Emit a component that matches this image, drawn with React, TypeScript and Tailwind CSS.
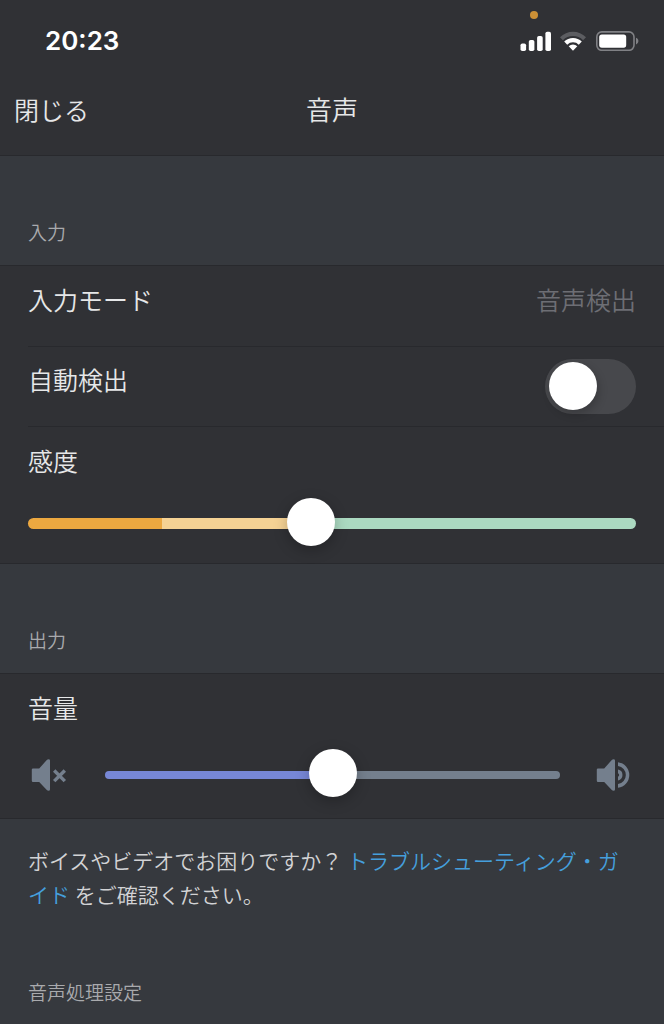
import { useState } from 'react';
import type { CSSProperties, ReactNode } from 'react';

const THUMB = 48;

function fillStyle(value: number): CSSProperties {
  const f = value / 1000;
  return { '--fill': `calc(${THUMB / 2}px + (100% - ${THUMB}px) * ${f})` } as CSSProperties;
}

const sliderBase =
  'block w-full cursor-pointer appearance-none bg-transparent [&::-webkit-slider-thumb]:size-12 [&::-webkit-slider-thumb]:appearance-none [&::-webkit-slider-thumb]:rounded-full [&::-webkit-slider-thumb]:bg-white [&::-webkit-slider-thumb]:shadow-[0_4px_14px_rgba(0,0,0,0.25)]';

function StatusBar() {
  return (
    <div className="flex items-center justify-between pl-[45px] pr-[25px] pt-[23px]">
      <time className="font-['Inter',sans-serif] text-[26px] leading-9 font-semibold text-white">20:23</time>
      <div className="relative flex items-center gap-2">
        <span className="absolute -top-5 left-[10px] size-2 rounded-full bg-[#cc9036]" />
        <svg width="32" height="20" viewBox="0 0 32 20" fill="#fff" aria-hidden="true">
          <rect x="0.5" y="12.500" width="5.600" height="7.500" rx="1.8" />
          <rect x="8.800" y="9" width="5.600" height="11" rx="1.8" />
          <rect x="17.100" y="5" width="5.600" height="15" rx="1.8" />
          <rect x="25.400" y="0.700" width="5.600" height="19.300" rx="1.8" />
        </svg>
        <svg width="28" height="20" viewBox="0 0 28 20" aria-hidden="true">
          <path d="M0 6.200a18.500 18.500 0 0 1 26 0l-2.900 3a14.300 14.300 0 0 0-20.200 0z" fill="#5c5d61" />
          <path d="M4.200 10.600a12.400 12.400 0 0 1 17.600 0l-3 3.100a8.200 8.200 0 0 0-11.600 0z" fill="#fff" />
          <path d="M8.700 15.300a6.200 6.200 0 0 1 8.600 0L13 19.800z" fill="#fff" />
        </svg>
        <svg width="43" height="20" viewBox="0 0 43 20" aria-hidden="true">
          <rect x="0.800" y="0.900" width="37.200" height="18.400" rx="5" fill="none" stroke="#808185" strokeWidth="1.6" />
          <rect x="3.200" y="3.500" width="27" height="13.200" rx="2.6" fill="#fff" />
          <path d="M40 6.800v6.600c1.500-.6 2.400-1.800 2.400-3.300S41.500 7.400 40 6.800z" fill="#808185" />
        </svg>
      </div>
    </div>
  );
}

function SectionTitle({ children }: { children: ReactNode }) {
  return <h2 className="px-7 pt-[60px] pb-[17px] text-[19px] leading-8 font-[350] text-[#a9aaad]">{children}</h2>;
}

function MutedIcon() {
  return (
    <svg width="36" height="34" viewBox="0 0 36 34" className="shrink-0" aria-hidden="true">
      <path d="M2 10.400h6.200L15.800 2Q16.600 1.200 17.500 1.200q1.500 0 1.500 1.300v29q0 1.300-1.500 1.300-.9 0-1.700-.8l-7.600-8H2Q.8 24 .8 22.800V11.600Q.8 10.400 2 10.400z" fill="#747f8d" />
      <path d="m24.400 13.700 8.200 8.200m0-8.200-8.200 8.200" fill="none" stroke="#747f8d" strokeWidth="3.400" strokeLinecap="square" />
    </svg>
  );
}

function SpeakerIcon() {
  return (
    <svg width="36" height="34" viewBox="0 0 36 34" className="shrink-0" aria-hidden="true">
      <path d="M2 10.400h6.200L15.800 2Q16.600 1.200 17.500 1.200q1.500 0 1.500 1.300v29q0 1.300-1.500 1.300-.9 0-1.700-.8l-7.600-8H2Q.8 24 .8 22.800V11.600Q.8 10.400 2 10.400z" fill="#747f8d" />
      <path d="M22 11.600a5.500 5.500 0 0 1 0 10.800v-3.600a2 2 0 0 0 0-3.600z" fill="#747f8d" />
      <path d="M22 4.200a12.900 12.900 0 0 1 0 25.600v-3.700a9.200 9.200 0 0 0 0-18.200z" fill="#747f8d" />
    </svg>
  );
}

export default function App() {
  const [auto, setAuto] = useState(false);
  const [sensitivity, setSensitivity] = useState(462);
  const [volume, setVolume] = useState(502);

  return (
    <div lang="ja" className="min-h-screen bg-[#36393e] font-['Noto_Sans_CJK_JP',sans-serif] text-[#e6e7e8]">
      <header className="border-b border-[#28292d] bg-[#303135]">
        <StatusBar />
        <div className="grid grid-cols-[1fr_auto_1fr] items-center px-[14px] pt-[30px] pb-[26px]">
          <button type="button" className="cursor-pointer justify-self-start text-[25px] leading-10 font-[350]">
            閉じる
          </button>
          <h1 className="text-[26px] leading-10 font-[350]">音声</h1>
        </div>
      </header>

      <main>
        <section>
          <SectionTitle>入力</SectionTitle>
          <div className="border-y border-[#28292d] bg-[#303135]">
            <button type="button" className="flex w-full cursor-pointer items-center justify-between px-7 pt-[13px] pb-[27px] text-[25px] leading-10 font-[350]">
              <span>入力モード</span>
              <span className="text-[#6d6e74]">音声検出</span>
            </button>
            <label className="ml-7 flex cursor-pointer justify-between border-y border-[#28292d] pt-3 pr-7 pb-3">
              <span className="text-[25px] leading-10 font-[350]">自動検出</span>
              <input
                type="checkbox"
                role="switch"
                checked={auto}
                onChange={(e) => setAuto(e.target.checked)}
                className="h-[55px] w-[91px] cursor-pointer appearance-none rounded-full bg-[#47484c] px-1 py-[3px] before:block before:size-12 before:rounded-full before:bg-white before:shadow-[2px_4px_10px_rgba(0,0,0,0.2)] checked:bg-[#7289da] checked:before:ml-auto"
              />
            </label>
            <div className="px-7 pt-[13px] pb-4">
              <label htmlFor="sensitivity" className="block text-[25px] leading-10 font-[350]">
                感度
              </label>
              <input
                id="sensitivity"
                type="range"
                min={0}
                max={1000}
                value={sensitivity}
                onChange={(e) => setSensitivity(Number(e.target.value))}
                style={fillStyle(sensitivity)}
                className={`${sliderBase} mt-[19px] h-12 [&::-webkit-slider-runnable-track]:h-[11px] [&::-webkit-slider-runnable-track]:rounded-full [&::-webkit-slider-runnable-track]:bg-[linear-gradient(to_right,#eca840_22%,#f5d294_22%,#f5d294_var(--fill),#abd9c1_var(--fill))] [&::-webkit-slider-thumb]:-mt-5`}
              />
            </div>
          </div>
        </section>

        <section>
          <SectionTitle>出力</SectionTitle>
          <div className="border-y border-[#28292d] bg-[#303135] px-7 pt-[13px] pb-[19px]">
            <label htmlFor="volume" className="block text-[25px] leading-10 font-[350]">
              音量
            </label>
            <div className="mt-6 flex items-center justify-between pl-[3px] pr-1">
              <MutedIcon />
              <input
                id="volume"
                type="range"
                min={0}
                max={1000}
                value={volume}
                onChange={(e) => setVolume(Number(e.target.value))}
                style={fillStyle(volume)}
                className={`${sliderBase} mr-9 ml-[38px] h-12 min-w-0 flex-1 [&::-webkit-slider-runnable-track]:h-2 [&::-webkit-slider-runnable-track]:rounded-full [&::-webkit-slider-runnable-track]:bg-[linear-gradient(to_right,#7787d6_var(--fill),#747f8d_var(--fill))] [&::-webkit-slider-thumb]:mt-[-22px]`}
              />
              <SpeakerIcon />
            </div>
          </div>
          <p className="px-7 pt-6 pb-[5px] text-[21px] leading-[34px] font-[350] text-[#d2d3d5]">
            ボイスやビデオでお困りですか？{' '}
            <a href="#troubleshooting" className="text-[#459fdc]">
              トラブルシューティング・ガイド
            </a>{' '}
            をご確認ください。
          </p>
        </section>

        <section>
          <SectionTitle>音声処理設定</SectionTitle>
        </section>
      </main>
    </div>
  );
}
